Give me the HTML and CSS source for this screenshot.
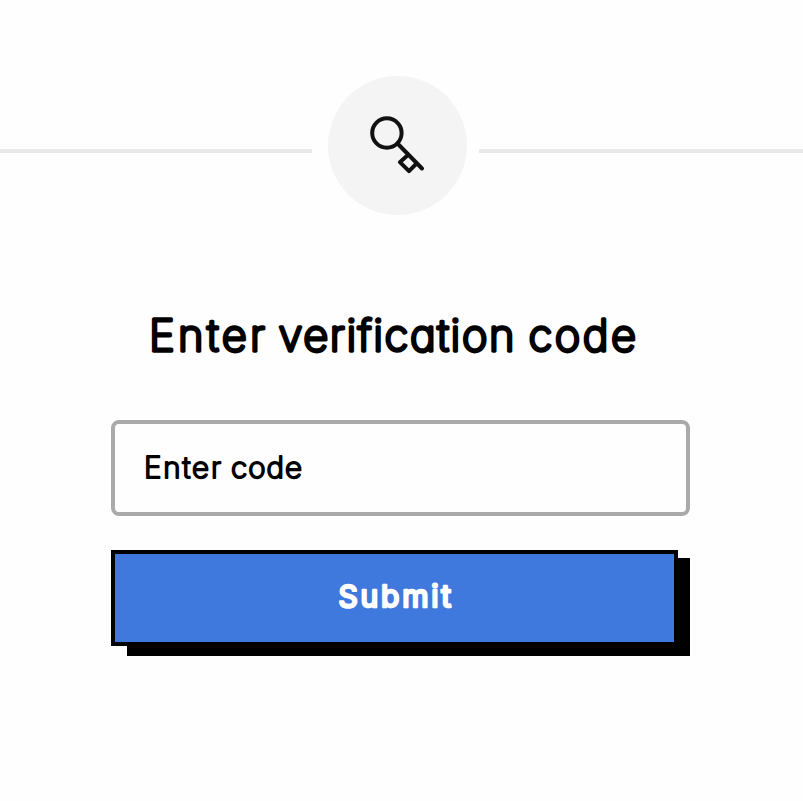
FILE: index.html
```html
<!DOCTYPE html>
<html lang="en">
<head>
<meta charset="utf-8">
<title>Enter verification code</title>
<link rel="stylesheet" href="styles.css">
</head>
<body>
<main class="page">
  <div class="divider">
    <span class="rule rule-left"></span>
    <div class="badge">
      <svg class="key" viewBox="0 0 60 60" fill="none" stroke="#111" stroke-width="4" stroke-linecap="round" stroke-linejoin="round">
        <circle cx="18.9" cy="18" r="14.7"/>
        <path d="M29.5 28.5 54 53.5M40.5 39.5 31.9 47.2 41 56.2 48.6 48.5"/>
      </svg>
    </div>
    <span class="rule rule-right"></span>
  </div>
  <form class="form">
    <h1 class="title">
      <svg class="lettering" width="500" height="58">
        <text y="43.5"><tspan x="0" textLength="116">Enter</tspan> <tspan x="129.5" textLength="236">verification</tspan> <tspan x="379.5" textLength="107.5">code</tspan></text>
      </svg>
    </h1>
    <div class="field">
      <svg class="lettering" width="170" height="40">
        <text y="29.5"><tspan x="0" textLength="77">Enter</tspan> <tspan x="87" textLength="71">code</tspan></text>
      </svg>
    </div>
    <button class="submit" type="button">
      <span class="submit-face">
        <svg class="lettering" width="116" height="40"><text x="1.5" y="29" textLength="112.5">Submit</text></svg>
      </span>
    </button>
  </form>
</main>
</body>
</html>
```
FILE: styles.css
```css
* { box-sizing: border-box; }
body {
  margin: 0;
  background: #fefefe;
  color: #000;
  font-family: Inter, "Open Sans", sans-serif;
  font-feature-settings: "cv11" 1;
}
.page { width: 803px; height: 801px; overflow: hidden; padding-top: 76px; }
.divider { display: flex; height: 139px; }
.rule { height: 4px; margin-top: 73.4px; background: #e8e8e8; }
.rule-left { width: 312px; margin-right: 16px; }
.rule-right { flex: 1; margin-left: 11.5px; }
.badge {
  width: 139px;
  height: 139px;
  border-radius: 50%;
  background: #f4f4f4;
  padding: 39px 0 0 40px;
}
.key { display: block; width: 60px; height: 60px; }
.lettering {
  display: block;
  overflow: visible;
  fill: currentColor;
  stroke: currentColor;
  stroke-linejoin: round;
  stroke-linecap: round;
}
.form { width: 579px; margin: 92px 0 0 111px; }
.title {
  margin: 0 0 55px 38px;
  height: 58px;
  font-size: 43.5px;
  font-weight: 200;
  stroke-width: 3.3px;
}
.field {
  display: flex;
  align-items: center;
  height: 96px;
  border: 4px solid #aaa;
  border-radius: 8px;
  padding-left: 29px;
  font-size: 29.5px;
  font-weight: 200;
  stroke-width: 2.1px;
}
.submit {
  display: block;
  position: relative;
  width: 579px;
  height: 106px;
  margin-top: 34px;
  padding: 0 12px 10px 0;
  border: 0;
  background: none;
  color: #fff;
  font: inherit;
}
.submit::before {
  content: "";
  position: absolute;
  inset: 8px 0 0 16px;
  background: #000;
}
.submit-face {
  display: flex;
  align-items: center;
  justify-content: center;
  position: relative;
  height: 96px;
  border: 4px solid #000;
  background: #3f79dd;
  font-size: 30px;
  font-weight: 400;
  stroke-width: 2.5px;
}
```
